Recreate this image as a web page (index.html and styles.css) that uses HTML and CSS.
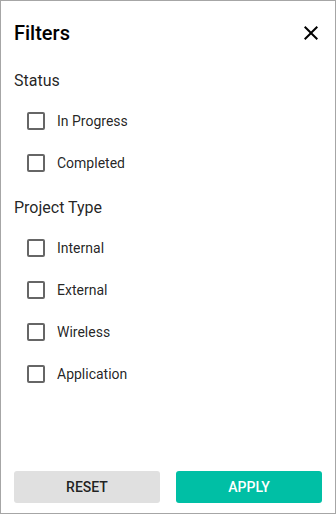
FILE: index.html
```html
<!DOCTYPE html>
<html>
<head>
<meta charset="utf-8">
<link rel="stylesheet" href="styles.css">
</head>
<body>
<div class="panel">
  <div class="header">
    <div class="title">Filters</div>
    <svg class="close" width="24" height="24" viewBox="0 0 24 24"><path d="M19 6.41L17.59 5 12 10.59 6.41 5 5 6.41 10.59 12 5 17.59 6.41 19 12 13.41 17.59 19 19 17.59 13.41 12z" fill="#000"/></svg>
  </div>
  <div class="content">
    <div class="section">
      <div class="section-title">Status</div>
      <label class="row"><span class="box"></span><span class="label">In Progress</span></label>
      <label class="row"><span class="box"></span><span class="label">Completed</span></label>
    </div>
    <div class="section">
      <div class="section-title">Project Type</div>
      <label class="row"><span class="box"></span><span class="label">Internal</span></label>
      <label class="row"><span class="box"></span><span class="label">External</span></label>
      <label class="row"><span class="box"></span><span class="label">Wireless</span></label>
      <label class="row"><span class="box"></span><span class="label">Application</span></label>
    </div>
  </div>
  <div class="footer">
    <button class="btn reset">RESET</button>
    <button class="btn apply">APPLY</button>
  </div>
</div>
</body>
</html>
```
FILE: styles.css
```css
html, body {
  margin: 0;
  padding: 0;
  background: #fff;
}
body {
  font-family: Roboto, "Liberation Sans", Arial, sans-serif;
  color: rgba(0, 0, 0, 0.87);
}
.panel {
  box-sizing: border-box;
  width: 336px;
  height: 514px;
  border: 1px solid #a6a6a6;
  display: flex;
  flex-direction: column;
  background: #fff;
}
.header {
  display: flex;
  align-items: center;
  justify-content: space-between;
  padding: 20px 12px 0 13px;
  height: 24px;
}
.title {
  font-size: 20px;
  font-weight: 500;
  line-height: 24px;
  color: #000;
}
.close {
  display: block;
}
.content {
  flex: 1;
  padding: 24px 13px 0 13px;
}
.section {
  margin-bottom: 12px;
}
.section-title {
  font-size: 16px;
  line-height: 24px;
  margin-bottom: 7px;
  color: rgba(0, 0, 0, 0.87);
}
.row {
  display: flex;
  align-items: center;
  height: 42px;
  padding-left: 13px;
}
.box {
  box-sizing: border-box;
  width: 18px;
  height: 18px;
  border: 2px solid #666;
  border-radius: 2px;
  margin-right: 12px;
}
.label {
  font-size: 14px;
  line-height: 20px;
  color: rgba(0, 0, 0, 0.87);
}
.footer {
  display: flex;
  gap: 16px;
  padding: 0 13px 10px 13px;
}
.btn {
  flex: 1;
  height: 32px;
  border: none;
  border-radius: 3px;
  font-family: Roboto, "Liberation Sans", Arial, sans-serif;
  font-size: 14px;
  font-weight: 500;
  padding: 0;
}
.reset {
  background: #e0e0e0;
  color: rgba(0, 0, 0, 0.87);
}
.apply {
  background: #00bfa5;
  color: #fff;
}
```
